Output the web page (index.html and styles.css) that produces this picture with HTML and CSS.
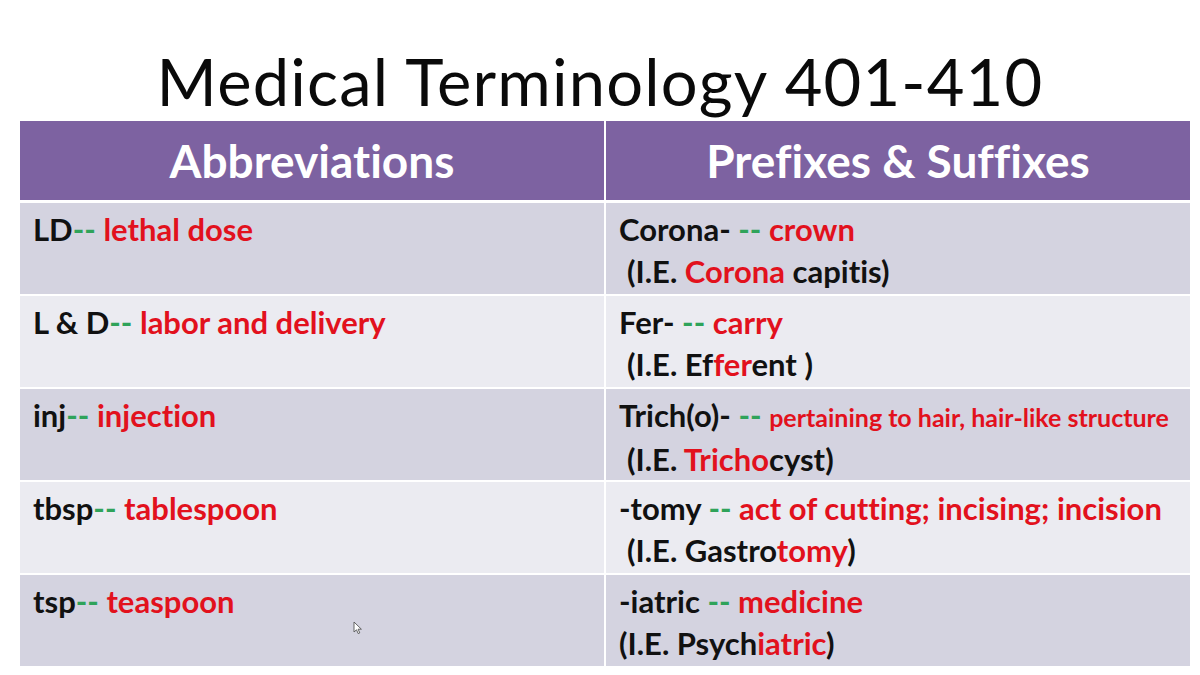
FILE: index.html
```html
<!DOCTYPE html>
<html>
<head>
<meta charset="utf-8">
<link rel="stylesheet" href="styles.css">
</head>
<body>
<div class="slide">
  <h1 class="title">Medical Terminology 401-410</h1>
  <div class="table">
    <div class="th">Abbreviations</div>
    <div class="th">Prefixes &amp; Suffixes</div>

    <div class="td dark"><div class="line">LD<span class="g">--</span> <span class="r">lethal dose</span></div></div>
    <div class="td dark"><div class="line">Corona- <span class="g">--</span> <span class="r">crown</span></div><div class="line ex">(I.E. <span class="r">Corona</span> capitis)</div></div>

    <div class="td light"><div class="line">L &amp; D<span class="g">--</span> <span class="r">labor and delivery</span></div></div>
    <div class="td light"><div class="line">Fer- <span class="g">--</span> <span class="r">carry</span></div><div class="line ex">(I.E. Ef<span class="r">fer</span>ent )</div></div>

    <div class="td dark"><div class="line">inj<span class="g">--</span> <span class="r">injection</span></div></div>
    <div class="td dark"><div class="line">Trich(o)- <span class="g">--</span> <span class="r small">pertaining to hair, hair-like structure</span></div><div class="line ex">(I.E. <span class="r">Tricho</span>cyst)</div></div>

    <div class="td light"><div class="line">tbsp<span class="g">--</span> <span class="r">tablespoon</span></div></div>
    <div class="td light"><div class="line">-tomy <span class="g">--</span> <span class="r">act of cutting; incising; incision</span></div><div class="line ex">(I.E. Gastro<span class="r">tomy</span>)</div></div>

    <div class="td dark cursor-cell"><div class="line">tsp<span class="g">--</span> <span class="r">teaspoon</span></div>
      <svg class="cursor" width="10" height="14" viewBox="0 0 10 14"><path d="M1 1 L1 11 L3.5 8.8 L5.2 12.6 L6.8 11.9 L5.1 8.2 L8.4 8.2 Z" fill="#fff" stroke="#555" stroke-width="0.9"/></svg>
    </div>
    <div class="td dark"><div class="line">-iatric <span class="g">--</span> <span class="r">medicine</span></div><div class="line">(I.E. Psych<span class="r">iatric</span>)</div></div>
  </div>
</div>
</body>
</html>
```

FILE: styles.css
```css
html, body {
  margin: 0;
  padding: 0;
  background: #fff;
}
.slide {
  width: 1200px;
  height: 675px;
  overflow: hidden;
  display: flex;
  flex-direction: column;
  align-items: center;
  font-family: Lato, "Open Sans", sans-serif;
  font-variant-ligatures: none;
  font-feature-settings: "liga" 0, "clig" 0;
}
.title {
  margin: 0;
  padding-top: 42px;
  font-weight: 400;
  font-size: 65px;
  line-height: 79px;
  color: #0a0a0a;
  letter-spacing: 1.2px;
  text-align: center;
  white-space: nowrap;
}
.table {
  margin-left: 10px;
  width: 1170px;
  display: grid;
  grid-template-columns: 584px 584px;
  grid-template-rows: 80px repeat(5, 91px);
  column-gap: 2px;
  row-gap: 2px;
}
.th {
  background: #7d62a1;
  color: #fff;
  font-weight: 700;
  font-size: 46px;
  display: flex;
  align-items: center;
  justify-content: center;
  margin-bottom: 1px;
}
.td {
  padding: 5px 10px 0 13px;
  color: #111;
  font-weight: 700;
  font-size: 31px;
  line-height: 42px;
  white-space: nowrap;
}
.dark { background: #d4d3e0; }
.light { background: #ebebf1; }
.g { color: #2fa35a; }
.r { color: #e2111d; }
.small { font-size: 25px; }
.ex { padding-left: 8px; }
.cursor-cell { position: relative; }
.cursor {
  position: absolute;
  left: 333px;
  top: 46px;
}
```
